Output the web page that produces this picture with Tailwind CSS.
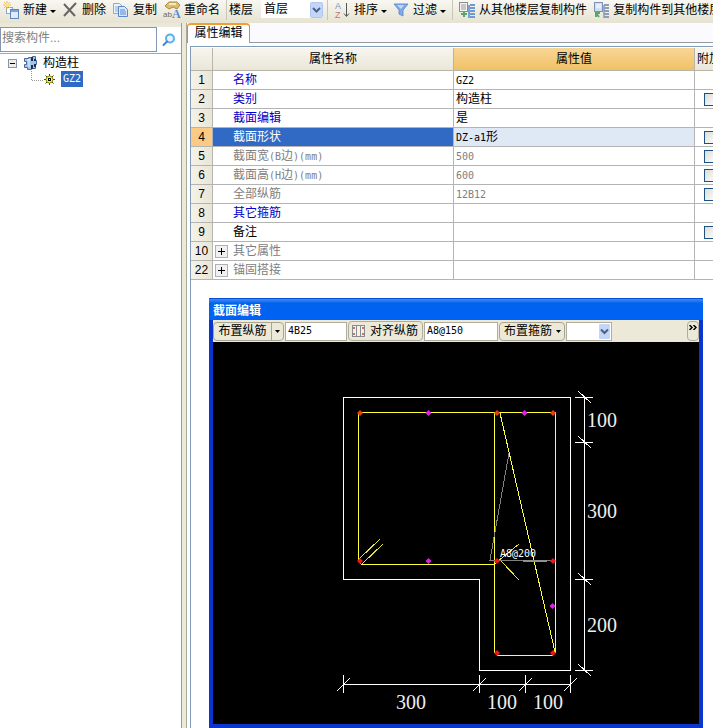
<!DOCTYPE html>
<html lang="zh-CN">
  <head>
    <meta charset="UTF-8" />
    <meta name="viewport" content="width=device-width, initial-scale=1.0" />
    <title>属性编辑</title>
    <script src="https://cdn.jsdelivr.net/npm/@tailwindcss/browser@4"></script>
  </head>
  <body
    class="flex h-screen flex-col overflow-hidden bg-white font-['Liberation_Sans','Noto_Sans_CJK_SC',sans-serif] text-[12px] leading-4 text-black"
  >
    <!-- main toolbar -->
    <header
      class="flex h-[23px] shrink-0 items-center overflow-hidden bg-linear-to-b from-[#f8f7f1] to-[#e6e3d2] pb-[3px] pl-[3px] whitespace-nowrap"
    >
      <button class="flex shrink-0 items-center gap-1">
        <svg width="16" height="18" viewBox="0 0 16 18">
          <rect x="3.5" y="6.5" width="6" height="6" fill="#fff" stroke="#8da6cc" />
          <rect x="7.5" y="8.5" width="8" height="9" fill="#dfeafa" stroke="#6485b8" />
          <path d="M8 9h7v2H8z" fill="#7fa2d8" />
          <path d="M4 0v8M0 4h8M1 1l6 6M7 1L1 7" stroke="#f0bd45" stroke-width="1" />
          <circle cx="4" cy="4" r="2" fill="#ffe38c" />
        </svg>
        <span>新建</span>
        <svg class="-ml-1 mt-1" width="11" height="4" viewBox="0 0 11 4"><path d="M3 0h6L6 3z" /></svg>
      </button>
      <button class="ml-1 flex shrink-0 items-center gap-1">
        <svg width="16" height="16" viewBox="0 0 16 16">
          <path d="M2 2l11 12M14 1L2 14" stroke="#666" stroke-width="2" />
        </svg>
        <span>删除</span>
      </button>
      <button class="ml-[7px] flex shrink-0 items-center gap-1">
        <svg width="16" height="16" viewBox="0 0 16 16">
          <path d="M.5 1.5h6l3 3v7h-9z" fill="#eaf2fd" stroke="#8aaade" />
          <path d="M2 5h4M2 7h4M2 9h4" stroke="#8aaade" />
          <path d="M5.5 4.5h6l3 3v7h-9z" fill="#d9e7fb" stroke="#5b86c9" />
          <path d="M7 8h5M7 10h6M7 12h6" stroke="#5b86c9" />
        </svg>
        <span>复制</span>
      </button>
      <button class="ml-[6px] flex shrink-0 items-center gap-[3px]">
        <svg width="18" height="18" viewBox="0 0 18 18">
          <path d="M2 5l4-4h8l3 3-3 4-4-2-4 2z" fill="#d9bd72" stroke="#a98b42" />
          <path d="M6 3h7" stroke="#f6e8b8" stroke-width="2" />
          <text x="0" y="16" font-size="8" fill="#6a6a6a" font-family="Liberation Sans">ab</text>
          <text x="9" y="17" font-size="12" font-weight="bold" fill="#5b8ad0" font-family="Liberation Serif">A</text>
        </svg>
        <span>重命名</span>
      </button>
      <div class="mx-[6px] h-5 w-px shrink-0 bg-[#c9c6b5]"></div>
      <label for="floor" class="-ml-1 shrink-0">楼层</label>
      <div class="relative mb-[2px] ml-2 shrink-0">
        <select id="floor" class="block h-[18px] w-[62px] appearance-none bg-white pl-[3px] text-[12px] leading-4">
          <option>首层</option>
        </select>
        <svg class="pointer-events-none absolute top-[2px] right-0" width="13" height="16" viewBox="0 0 13 16">
          <rect x=".5" y=".5" width="12" height="15" rx="1" fill="#c3d5fb" stroke="#b0c6f0" />
          <path d="M3 6l3.5 3.5L10 6" fill="none" stroke="#4d6185" stroke-width="2" />
        </svg>
      </div>
      <div class="mx-1 h-5 w-px shrink-0 bg-[#c9c6b5]"></div>
      <button class="flex shrink-0 items-center gap-1">
        <svg width="18" height="18" viewBox="0 0 18 18">
          <text x="3" y="8" font-size="9" fill="#7393c8" font-family="Liberation Sans">A</text>
          <text x="3" y="17" font-size="9" fill="#c67878" font-family="Liberation Sans">Z</text>
          <path d="M14.5 2v13M12 12.5l2.500 3 2.500-3" fill="none" stroke="#555" />
        </svg>
        <span>排序</span>
        <svg class="-ml-1 mt-1" width="11" height="4" viewBox="0 0 11 4"><path d="M3 0h6L6 3z" /></svg>
      </button>
      <button class="ml-1 flex shrink-0 items-center gap-1">
        <svg width="16" height="16" viewBox="0 0 16 16">
          <path d="M1 2h14l-5 6v6l-4-2V8z" fill="#7ea9ea" stroke="#6a90d0" />
          <path d="M4 3h7l-3 4z" fill="#c0d8fa" />
        </svg>
        <span>过滤</span>
        <svg class="-ml-1 mt-1" width="11" height="4" viewBox="0 0 11 4"><path d="M3 0h6L6 3z" /></svg>
      </button>
      <div class="mx-1 h-5 w-px shrink-0 bg-[#c9c6b5]"></div>
      <button class="ml-[2px] flex shrink-0 items-center gap-[3px]">
        <svg width="17" height="18" viewBox="0 0 17 18">
          <rect x=".5" y="1.5" width="8" height="9" fill="#f3f3f3" stroke="#8c8c8c" />
          <path d="M2 4h5M2 6h5M2 8h5" stroke="#9a9a9a" />
          <path d="M5 10v6M2 13h6" stroke="#57a868" stroke-width="2" />
          <path d="M10 4v13" stroke="#7d9fd2" stroke-width="2" />
          <path d="M11 4h5M11 7h5M11 10h5M11 13h5M11 16h5" stroke="#6f99d6" stroke-width="2" />
        </svg>
        <span>从其他楼层复制构件</span>
      </button>
      <button class="ml-[6px] flex shrink-0 items-center gap-[3px]">
        <svg width="17" height="18" viewBox="0 0 17 18">
          <rect x="1.5" y="1.5" width="8" height="9" fill="#cfdff7" stroke="#7a92b8" />
          <path d="M3 4h5M3 6h5" stroke="#fff" />
          <path d="M3 12l3 4M3 16v-4h4" fill="none" stroke="#57a868" stroke-width="2" />
          <path d="M11 4v13" stroke="#a5adba" stroke-width="2" />
          <path d="M11 4h5M11 7h5M11 10h5M11 13h5M11 16h5" stroke="#8d9db5" stroke-width="2" />
        </svg>
        <span>复制构件到其他楼层</span>
      </button>
    </header>

    <main class="flex min-h-0 flex-1">
      <!-- component tree -->
      <aside class="flex w-[182px] shrink-0 flex-col border-r border-[#9a9a96]">
        <div class="flex h-[31px] items-end border-b border-[#a3a8b0] bg-linear-to-b from-[#ebe8d9] from-15% to-white to-15% pb-px">
          <input
            type="text"
            aria-label="搜索构件"
            placeholder="搜索构件..."
            class="h-[25px] min-w-0 flex-1 border border-[#8197b4] bg-white px-px pb-[3px] text-[12px] leading-4 placeholder:text-[#808080]"
          />
          <button aria-label="搜索" class="flex h-[25px] w-6 items-center justify-center">
            <svg width="14" height="14" viewBox="0 0 14 14">
              <circle cx="8" cy="5.5" r="4" fill="#e6f5ff" stroke="#5eafe6" stroke-width="2" />
              <path d="M5 8.5L1.5 12" stroke="#4484d2" stroke-width="2" stroke-linecap="round" />
            </svg>
          </button>
        </div>
        <ul class="pt-px pl-2">
          <li>
            <div class="flex h-4 items-center">
              <svg width="9" height="9" viewBox="0 0 9 9">
                <rect x=".5" y=".5" width="8" height="8" fill="#efede5" stroke="#8797ab" />
                <path d="M2 4.5h5" stroke="#000" />
              </svg>
              <svg class="ml-[6px]" width="15" height="14" viewBox="0 0 15 14">
                <path d="M5.5 1.5h4v-1h3v4h1v4h-1v4h-3v-1h-1v2h-4v-2h-3v-3h2v-3h-2v-3h4z" fill="#a5c4ea" stroke="#47689a" />
                <path d="M6 3v8M4 4h3" stroke="#eef6ff" />
                <path d="M9 1v4M9 9v4M12 3v2M12 8v3" stroke="#1c2f50" stroke-width="2" />
              </svg>
              <span class="ml-[5px]">构造柱</span>
            </div>
            <ul>
              <li class="flex h-4 items-center pl-[23px]">
                <svg class="self-start" width="12" height="10" viewBox="0 0 12 10">
                  <path d="M.5 0v9.5H12" fill="none" stroke="#999" stroke-dasharray="1 1" />
                </svg>
                <svg class="ml-px" width="11" height="11" viewBox="0 0 11 11">
                  <path d="M5.5 0v11M0 5.5h11M1.5 1.5l8 8M9.5 1.5l-8 8" stroke="#444408" stroke-width="1" />
                  <circle cx="5.5" cy="5.5" r="3.5" fill="#ff0" stroke="#8a8a10" />
                  <rect x="4" y="4" width="3" height="3" />
                  <path d="M5 5h1v1H5z" fill="#ff0" />
                </svg>
                <span class="ml-[6px] h-4 bg-[#316ac5] px-[2px] font-['DejaVu_Sans_Mono',monospace] text-[10px] text-white">GZ2</span>
              </li>
            </ul>
          </li>
        </ul>
      </aside>
      <div class="w-1 shrink-0 bg-[#ece9d8]"></div>

      <section class="flex min-w-0 flex-1 flex-col border-l border-[#aaa79e]">
        <div class="flex h-5 shrink-0 items-end border-b border-[#919b9c] bg-[#fbfaff]">
          <button
            class="-mb-px h-5 w-[63px] rounded-t-sm border-x border-t-2 border-x-[#919b9c] border-t-[#efa02e] bg-white pb-[2px] text-center"
          >
            属性编辑
          </button>
        </div>

        <div class="mt-[3px] ml-[3px] flex min-h-0 flex-1 flex-col border-t border-l border-[#7f9db9]">
          <!-- property table -->
          <table class="mt-px w-full shrink-0 table-fixed border-separate border-spacing-0">
            <colgroup>
              <col class="w-[22px]" />
              <col />
              <col />
              <col class="w-[18px]" />
            </colgroup>
            <thead>
              <tr class="h-[23px] bg-linear-to-b from-[#f7f5ee] to-[#e9e6d8]">
                <th class="border-r border-b border-[#b8b5a8]"></th>
                <th class="border-r border-b border-[#b8b5a8] p-0 font-normal">属性名称</th>
                <th class="border-r border-b border-[#b8b5a8] bg-linear-to-b from-[#f9d596] to-[#f0c165] p-0 font-normal">属性值</th>
                <th class="overflow-hidden border-b border-[#b8b5a8] p-0 pl-[2px] text-left font-normal whitespace-nowrap">附加</th>
              </tr>
            </thead>
            <tbody
              class="[&_td]:h-[19px] [&_td]:overflow-hidden [&_td]:border-b [&_td]:border-[#b4b4b4] [&_td]:p-0 [&_td]:leading-4 [&_td]:whitespace-nowrap [&_td:not(:last-child)]:border-r [&_td:first-child]:bg-linear-to-r [&_td:first-child]:from-[#f5f3ea] [&_td:first-child]:to-[#e9e6d6] [&_td:first-child]:text-center [&_td:nth-child(2)]:pl-5 [&_td:nth-child(3)]:pl-[2px] [&_td:nth-child(4)]:pl-[9px] [&_i]:font-['DejaVu_Sans_Mono',monospace] [&_i]:text-[10px] [&_i]:not-italic [&_input]:block [&_input]:size-[13px] [&_input]:appearance-none [&_input]:border [&_input]:border-[#1c5180] [&_input]:bg-linear-to-br [&_input]:from-[#dcdcd7] [&_input]:to-white"
            >
              <tr>
                <td>1</td>
                <td class="text-[#0000c8]">名称</td>
                <td><i>GZ2</i></td>
                <td></td>
              </tr>
              <tr>
                <td>2</td>
                <td class="text-[#0000c8]">类别</td>
                <td>构造柱</td>
                <td><input type="checkbox" aria-label="附加 类别" /></td>
              </tr>
              <tr>
                <td>3</td>
                <td class="text-[#0000c8]">截面编辑</td>
                <td>是</td>
                <td></td>
              </tr>
              <tr>
                <td><div class="h-[18px] bg-[#fbcb85] leading-[18px]">4</div></td>
                <td class="bg-[#316ac5] text-white">截面形状</td>
                <td class="bg-[#dfe9f5]"><i>DZ-a1</i>形</td>
                <td><input type="checkbox" aria-label="附加 截面形状" /></td>
              </tr>
              <tr class="text-[#808080]">
                <td class="text-black">5</td>
                <td>截面宽<i>(B</i>边<i>)(mm)</i></td>
                <td><i>500</i></td>
                <td><input type="checkbox" aria-label="附加 截面宽" /></td>
              </tr>
              <tr class="text-[#808080]">
                <td class="text-black">6</td>
                <td>截面高<i>(H</i>边<i>)(mm)</i></td>
                <td><i>600</i></td>
                <td><input type="checkbox" aria-label="附加 截面高" /></td>
              </tr>
              <tr class="text-[#808080]">
                <td class="text-black">7</td>
                <td>全部纵筋</td>
                <td><i>12B12</i></td>
                <td><input type="checkbox" aria-label="附加 全部纵筋" /></td>
              </tr>
              <tr>
                <td>8</td>
                <td class="text-[#0000c8]">其它箍筋</td>
                <td></td>
                <td></td>
              </tr>
              <tr>
                <td>9</td>
                <td>备注</td>
                <td></td>
                <td><input type="checkbox" aria-label="附加 备注" /></td>
              </tr>
              <tr class="text-[#808080]">
                <td class="text-black">10</td>
                <td>
                  <div class="-ml-[18px] flex items-center gap-[5px]">
                    <button aria-label="展开 其它属性">
                      <svg width="13" height="13" viewBox="0 0 13 13">
                        <rect x=".5" y=".5" width="12" height="12" fill="#f0f0f0" stroke="#b0b0b0" />
                        <path d="M3 6.5h7M6.5 3v7" stroke="#000" />
                      </svg>
                    </button>
                    <span>其它属性</span>
                  </div>
                </td>
                <td></td>
                <td></td>
              </tr>
              <tr class="text-[#808080]">
                <td class="text-black">22</td>
                <td>
                  <div class="-ml-[18px] flex items-center gap-[5px]">
                    <button aria-label="展开 锚固搭接">
                      <svg width="13" height="13" viewBox="0 0 13 13">
                        <rect x=".5" y=".5" width="12" height="12" fill="#f0f0f0" stroke="#b0b0b0" />
                        <path d="M3 6.5h7M6.5 3v7" stroke="#000" />
                      </svg>
                    </button>
                    <span>锚固搭接</span>
                  </div>
                </td>
                <td></td>
                <td></td>
              </tr>
            </tbody>
          </table>

          <!-- section editor window -->
          <div
            class="mt-[18px] mr-[10px] ml-[18px] flex min-h-0 flex-1 flex-col border-x-4 border-b-4 border-[#0a36cf] bg-black"
          >
            <h2
              class="-mx-1 h-[22px] shrink-0 border-t border-[#0b4fd6] bg-linear-to-b from-[#3a8cf8] via-[#0063ee] via-20% to-[#0062f5] pt-1 pl-1 font-bold text-white"
            >
              截面编辑
            </h2>
            <div class="flex h-[22px] shrink-0 items-center overflow-hidden bg-[#ece9d8] whitespace-nowrap">
              <div class="flex h-[19px] w-[71px] shrink-0 items-center rounded-sm border border-[#a8a594]">
                <button class="flex-1 text-center">布置纵筋</button>
                <button aria-label="布置纵筋选项" class="flex h-full w-3 items-center justify-center border-l border-[#a8a594]">
                  <svg width="5" height="3" viewBox="0 0 5 3"><path d="M0 0h5L2.5 3z" /></svg>
                </button>
              </div>
              <input
                type="text"
                aria-label="纵筋"
                value="4B25"
                class="ml-px h-[19px] w-[62px] shrink-0 border border-[#b0ad9c] bg-white px-[2px] pb-[2px] font-['DejaVu_Sans_Mono',monospace] text-[10px]"
              />
              <button class="ml-px flex h-5 w-[75px] shrink-0 items-center gap-1 rounded-sm border border-[#b0ad9c] pl-[2px]">
                <svg width="15" height="14" viewBox="0 0 15 14">
                  <rect x="1" y="1" width="13" height="12" fill="#f4f2ea" />
                  <path d="M1 1.5h13M1 12.5h13M1.5 1v12M5.5 1v12M9.5 1v12M13.5 1v12" stroke="#8a8a90" />
                  <path d="M2 4h2M2 10h2M11 4h2M11 10h2" stroke="#c8775f" stroke-width="2" />
                </svg>
                <span>对齐纵筋</span>
              </button>
              <input
                type="text"
                aria-label="箍筋"
                value="A8@150"
                class="ml-px h-[19px] w-[74px] shrink-0 border border-[#b0ad9c] bg-white px-[2px] pb-[2px] font-['DejaVu_Sans_Mono',monospace] text-[10px]"
              />
              <button class="ml-px flex h-[19px] w-[66px] shrink-0 items-center gap-1 rounded-sm border border-[#a8a594] pl-1">
                <span>布置箍筋</span>
                <svg width="5" height="3" viewBox="0 0 5 3"><path d="M0 0h5L2.5 3z" /></svg>
              </button>
              <div class="relative ml-px shrink-0">
                <select aria-label="箍筋类型" class="block h-[19px] w-[46px] appearance-none border border-[#b0ad9c] bg-white">
                  <option></option>
                </select>
                <svg class="pointer-events-none absolute top-[2px] right-[2px]" width="11" height="15" viewBox="0 0 11 15">
                  <rect width="11" height="15" rx="1" fill="#c3d5fb" />
                  <path d="M2 5.5L5.5 9 9 5.5" fill="none" stroke="#4d6185" stroke-width="2" />
                </svg>
              </div>
              <button aria-label="更多" class="ml-auto flex h-5 w-3 shrink-0 justify-center rounded-sm border border-[#b0ad9c] pt-[3px]">
                <svg width="8" height="5" viewBox="0 0 8 5">
                  <path d="M.5 0L3 2.5.5 5M4.5 0L7 2.5 4.5 5" fill="none" stroke="#000" stroke-width="1.5" />
                </svg>
              </button>
            </div>

            <svg class="min-h-0 w-full flex-1" viewBox="213 342 486 382" preserveAspectRatio="xMinYMin meet" fill="none">
              <g shape-rendering="crispEdges">
                <!-- column outline -->
                <path d="M343.5 397.5h227v273h-91v-91h-136z" stroke="#fff" />
                <!-- stirrups -->
                <path d="M358.5 412.5h136M358.5 412.5v148l3 4h133l3-3" stroke="#ffff3c" />
                <path d="M494.5 412.5h61v240l-3 3h-55l-3-3z" stroke="#ffff3c" />
                <path d="M500 413l55 239" stroke="#ffff3c" />
                <path d="M359 559l21-20M362 564l21-20M498 561l21-17M501 561l18 19" stroke="#e6e632" />
                <!-- leader -->
                <path d="M509 453l-19 107h62" stroke="#808080" />
                <path d="M523 561h24" stroke="#909090" stroke-width="2" />
                <!-- dimension lines -->
                <path
                  d="M584.5 397v274M575 397.5h18M575 442.5h18M575 579.5h18M575 670.5h18M343 684.5h228M343.5 675v18M479.5 675v18M525.5 675v18M570.5 675v18"
                  stroke="#fff"
                />
                <path
                  d="M578 391l13 12M578 436l13 12M578 573l13 12M578 664l13 12M337 691l13-13M473 691l13-13M519 691l13-13M564 691l13-13"
                  stroke="#fff"
                />
              </g>
              <!-- bars -->
              <g fill="#f01414">
                <path d="M360 410l3 3-3 3-3-3zM497 410l3 3-3 3-3-3zM553 410l3 3-3 3-3-3z" fill="#e63c10" />
                <path d="M360 558l3 3-3 3-3-3zM497 558l3 3-3 3-3-3zM553 558l3 3-3 3-3-3zM497 650l3 3-3 3-3-3zM553 650l3 3-3 3-3-3z" />
              </g>
              <path
                d="M428.5 410l3 3-3 3-3-3zM524.5 410l3 3-3 3-3-3zM428.5 558l3 3-3 3-3-3zM552.5 603l3 3-3 3-3-3z"
                fill="#e020e0"
              />
              <text x="500" y="557" fill="#fff" font-size="10" font-family="DejaVu Sans Mono, monospace">A8@200</text>
              <g fill="#eee" font-size="20" font-family="Liberation Serif, serif">
                <text x="587" y="427">100</text>
                <text x="587" y="518">300</text>
                <text x="587" y="632">200</text>
                <text x="396" y="709">300</text>
                <text x="487" y="709">100</text>
                <text x="533" y="709">100</text>
              </g>
            </svg>
          </div>
        </div>
      </section>
    </main>
  </body>
</html>
